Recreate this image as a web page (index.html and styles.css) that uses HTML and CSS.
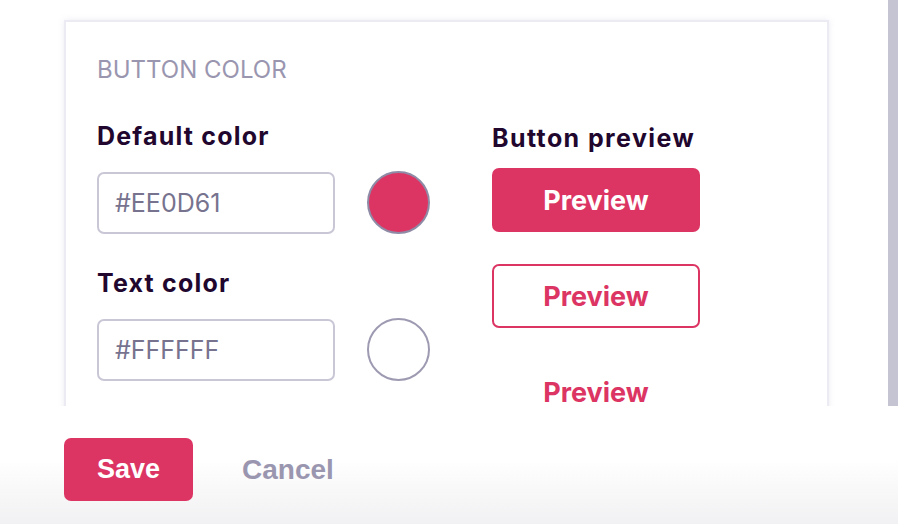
FILE: index.html
```html
<!DOCTYPE html>
<html>
<head>
<meta charset="utf-8">
<link rel="stylesheet" href="styles.css">
</head>
<body>
<div class="page">
  <div class="scroll">
    <div class="content">
      <div class="card">
        <div class="section-title">BUTTON COLOR</div>
        <div class="grid">
          <div class="left">
            <div class="field">
              <div class="label">Default color</div>
              <div class="row">
                <div class="input">#EE0D61</div>
                <div class="swatch swatch-red"></div>
              </div>
            </div>
            <div class="field">
              <div class="label">Text color</div>
              <div class="row">
                <div class="input">#FFFFFF</div>
                <div class="swatch swatch-white"></div>
              </div>
            </div>
          </div>
          <div class="right">
            <div class="label label-preview">Button preview</div>
            <div class="btn btn-filled">Preview</div>
            <div class="btn btn-outline">Preview</div>
            <div class="btn btn-text">Preview</div>
          </div>
        </div>
      </div>
    </div>
    <div class="scrollbar"></div>
  </div>
  <div class="footer">
    <div class="save">Save</div>
    <div class="cancel">Cancel</div>
  </div>
</div>
</body>
</html>
```

FILE: styles.css
```css
html, body {
  margin: 0;
  padding: 0;
  background: #ffffff;
}
.page {
  width: 898px;
  height: 524px;
  display: flex;
  flex-direction: column;
  overflow: hidden;
}
.scroll {
  height: 406px;
  display: flex;
  overflow: hidden;
  flex: none;
}
.content {
  flex: 1;
  padding: 20px 0 0 64px;
}
.scrollbar {
  width: 10px;
  background: #c5c4d3;
}
.card {
  width: 730px;
  height: 420px;
  border: 2px solid #eceaf2;
  box-shadow: 0 0 6px rgba(200, 196, 220, 0.35);
  padding: 34px 0 0 31px;
  box-sizing: content-box;
}
.section-title {
  font-family: "Inter", "Liberation Sans", sans-serif;
  font-size: 24px;
  color: #9a96b0;
  line-height: 28px;
}
.grid {
  display: flex;
  gap: 62px;
  margin-top: 37px;
}
.left {
  display: flex;
  flex-direction: column;
  gap: 34px;
}
.field {
  display: flex;
  flex-direction: column;
  gap: 20px;
}
.label {
  font-family: "Inter", "Lato", sans-serif;
  font-weight: 700;
  font-size: 25px;
  line-height: 30px;
  letter-spacing: 1.2px;
  color: #21062e;
}
.row {
  display: flex;
  align-items: center;
  gap: 32px;
}
.input {
  width: 238px;
  height: 62px;
  box-sizing: border-box;
  border: 2px solid #c9c7d6;
  border-radius: 7px;
  padding-left: 16px;
  display: flex;
  align-items: center;
  font-family: "Inter", "Liberation Sans", sans-serif;
  font-size: 25px;
  color: #77738f;
}
.swatch {
  width: 63px;
  height: 63px;
  box-sizing: border-box;
  border-radius: 50%;
  border: 2px solid #8f8ba7;
}
.swatch-red {
  background: #dc3563;
}
.swatch-white {
  background: #ffffff;
  border-color: #9e9ab2;
}
.right {
  display: flex;
  flex-direction: column;
  padding-top: 2px;
}
.label-preview {
  margin-bottom: 15px;
  letter-spacing: 1.4px;
}
.btn {
  width: 208px;
  height: 64px;
  flex: none;
  box-sizing: border-box;
  border-radius: 7px;
  display: flex;
  align-items: center;
  justify-content: center;
  font-family: "Inter", "Lato", sans-serif;
  font-weight: 700;
  font-size: 27px;
  margin-bottom: 32px;
}
.btn-filled {
  background: #dc3563;
  color: #ffffff;
}
.btn-outline {
  border: 2px solid #dc3563;
  color: #dc3563;
}
.btn-text {
  color: #dc3563;
}
.footer {
  flex: 1;
  display: flex;
  align-items: flex-start;
  gap: 49px;
  padding: 32px 0 0 64px;
  background: linear-gradient(to bottom, #ffffff 0%, #ffffff 45%, #f1f1f3 100%);
}
.save {
  width: 129px;
  height: 63px;
  border-radius: 7px;
  background: #dc3563;
  color: #ffffff;
  display: flex;
  align-items: center;
  justify-content: center;
  font-family: "Liberation Sans", Arial, sans-serif;
  font-weight: 700;
  font-size: 27px;
}
.cancel {
  height: 63px;
  display: flex;
  align-items: center;
  font-family: "Liberation Sans", Arial, sans-serif;
  font-weight: 700;
  font-size: 28px;
  color: #9a96b0;
}
```
